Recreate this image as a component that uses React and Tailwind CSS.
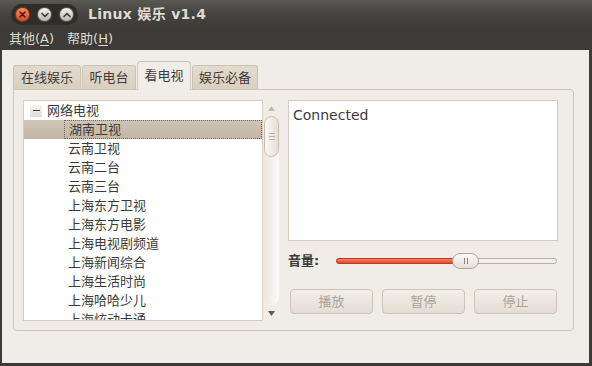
import { useState } from 'react';

const cjk = { fontFamily: '"DejaVu Sans", "Noto Sans CJK SC", sans-serif' };

const channels = [
  '湖南卫视',
  '云南卫视',
  '云南二台',
  '云南三台',
  '上海东方卫视',
  '上海东方电影',
  '上海电视剧频道',
  '上海新闻综合',
  '上海生活时尚',
  '上海哈哈少儿',
  '上海炫动卡通',
];

function WinButton({ kind }) {
  if (kind === 'close') {
    return (
      <div className="w-[15px] h-[15px] rounded-full bg-gradient-to-b from-[#f78a5e] to-[#d9481e] border border-[#8a3a1e] flex items-center justify-center">
        <svg width="7" height="7" viewBox="0 0 7 7">
          <path d="M1 1L6 6M6 1L1 6" stroke="#4a1a0a" strokeWidth="1.6" strokeLinecap="round" />
        </svg>
      </div>
    );
  }
  return (
    <div className="w-[15px] h-[15px] rounded-full bg-gradient-to-b from-[#f4f2ee] to-[#b9b5ac] border border-[#5a5852] flex items-center justify-center">
      <svg width="8" height="6" viewBox="0 0 8 6">
        <path d={kind === 'min' ? 'M1 1.5L4 4.5L7 1.5' : 'M1 4.5L4 1.5L7 4.5'} stroke="#3c3b37" strokeWidth="1.6" fill="none" strokeLinecap="round" strokeLinejoin="round" />
      </svg>
    </div>
  );
}

export default function App() {
  const [tab, setTab] = useState(2);
  const [sel, setSel] = useState(0);
  const tabs = [
    { label: '在线娱乐', w: 'w-[68px]' },
    { label: '听电台', w: 'w-[54px]' },
    { label: '看电视', w: 'w-[54px]' },
    { label: '娱乐必备', w: 'w-[66px]' },
  ];

  return (
    <div className="w-[592px] h-[366px] bg-[#3c3b37] flex flex-col overflow-hidden" style={cjk}>
      {/* Title bar */}
      <div className="h-[29px] flex items-center bg-gradient-to-b from-[#5a5853] via-[#44433f] to-[#3c3b37] pl-[11px]">
        <div className="flex items-center gap-[7px] bg-[#2e2d2a] rounded-full px-[4px] py-[3px]">
          <WinButton kind="close" />
          <WinButton kind="min" />
          <WinButton kind="max" />
        </div>
        <div className="ml-[10px] text-[14px] font-bold text-[#dfdbd2] tracking-[0.3px]">Linux 娱乐 v1.4</div>
      </div>

      {/* Menu bar */}
      <div className="h-[21px] flex items-start text-[13px] text-[#dfdbd2] pl-[9px] gap-[13px]">
        <span>其他(<span className="underline underline-offset-2">A</span>)</span>
        <span>帮助(<span className="underline underline-offset-2">H</span>)</span>
      </div>

      {/* Body */}
      <div className="flex-1 ml-[2px] mr-[3px] mb-[3px] bg-[#f0ede8] pl-[11px] pt-[11px] text-[13px] text-[#3c3b37]">
        {/* Tabs */}
        <div className="flex items-end gap-[1px] h-[28px]">
          {tabs.map((t, i) => (
            <button
              key={t.label}
              onClick={() => setTab(i)}
              className={
                i === tab
                  ? `${t.w} h-[29px] -mb-[1px] relative z-10 rounded-t-[4px] border border-b-0 border-[#cdc4b5] bg-[#f0ede8] flex items-center justify-center text-[13px] text-[#3c3b37]`
                  : `${t.w} h-[24px] rounded-t-[3px] border border-b-0 border-[#cbc1b1] bg-gradient-to-b from-[#e2dbcf] to-[#d8cfc0] flex items-center justify-center text-[13px] text-[#3c3b37]`
              }
            >
              {t.label}
            </button>
          ))}
        </div>

        {/* Notebook page */}
        <div className="w-[561px] h-[242px] border border-[#cdc4b5] rounded-b-[4px] rounded-tr-[4px] bg-[#f0ede8] flex pl-[9px] pt-[10px]">
          {/* Tree + scrollbar */}
          <div className="flex h-[221px]">
            <div className="w-[240px] h-full bg-white border border-[#d5ccbd] overflow-hidden">
              <div className="h-[19px] flex items-center">
                <div className="ml-[6px] w-[12px] h-[12px] bg-gradient-to-b from-[#f6f4f0] to-[#e2ddd4] flex items-center justify-center">
                  <div className="w-[7px] h-[1.5px] bg-[#3c3b37]" />
                </div>
                <span className="ml-[5px]">网络电视</span>
              </div>
              {channels.map((c, i) => (
                <div
                  key={c}
                  onClick={() => setSel(i)}
                  className={`h-[19px] flex items-center ${i === sel ? 'bg-gradient-to-b from-[#cfc5b6] to-[#c2b6a4]' : ''}`}
                >
                  <span className={`ml-[40px] pl-[4px] h-full flex-1 flex items-center ${i === sel ? 'border border-dotted border-[#6e665a]' : ''}`}>{c}</span>
                </div>
              ))}
            </div>
            {/* Scrollbar */}
            <div className="w-[17px] h-full flex flex-col items-center">
              <svg width="7" height="5" viewBox="0 0 7 5" className="mt-[6px]">
                <path d="M3.5 0L7 5H0Z" fill="#c4bbad" />
              </svg>
              <div className="mt-[5px] w-[15px] flex-1 rounded-full bg-gradient-to-r from-[#ece8e2] to-[#faf9f7] flex flex-col">
                <div className="h-[41px] w-[15px] rounded-full border border-[#c6bcac] bg-gradient-to-r from-[#f9f8f6] to-[#e5dfd5] flex flex-col items-center justify-center gap-[2px]">
                  <div className="w-[6px] h-[1px] bg-[#c0b6a6]" />
                  <div className="w-[6px] h-[1px] bg-[#c0b6a6]" />
                  <div className="w-[6px] h-[1px] bg-[#c0b6a6]" />
                </div>
              </div>
              <svg width="7" height="5" viewBox="0 0 7 5" className="mt-[6px] mb-[5px]">
                <path d="M0 0H7L3.5 5Z" fill="#5c574f" />
              </svg>
            </div>
          </div>

          {/* Right column */}
          <div className="ml-[8px] w-[270px] flex flex-col">
            <div className="h-[141px] bg-white border border-[#d5ccbd] px-[4px] pt-[4px] text-[14px] text-[#3c3b37]">Connected</div>
            <div className="mt-[10px] h-[20px] flex items-center">
              <span className="w-[48px] font-bold text-[13px] text-[#3c3b37]">音量:</span>
              <div className="relative w-[221px] h-[6px] rounded-full border border-[#b9ae9d] bg-[#f3f0eb]">
                <div className="absolute left-[-1px] top-[-1px] h-[6px] w-[120px] rounded-full bg-gradient-to-b from-[#f7806a] to-[#e2462b] border border-[#c0391f]" />
                <div className="absolute left-[115px] top-[-6px] w-[27px] h-[16px] rounded-full border border-[#b0a595] bg-gradient-to-b from-[#fbfaf8] to-[#e4dfd6] flex items-center justify-center gap-[2px]">
                  <div className="w-[1px] h-[6px] bg-[#8b8274]" />
                  <div className="w-[1px] h-[6px] bg-[#8b8274]" />
                </div>
              </div>
            </div>
            <div className="mt-[18px] flex gap-[9px] pl-[2px]">
              {['播放', '暂停', '停止'].map((b) => (
                <button
                  key={b}
                  disabled
                  className="w-[83px] h-[25px] rounded-[4px] border border-[#cdc3b4] bg-gradient-to-b from-[#f2efea] to-[#e3ddd3] text-[13px] text-[#aaa397]"
                >
                  {b}
                </button>
              ))}
            </div>
          </div>
        </div>
      </div>
    </div>
  );
}
